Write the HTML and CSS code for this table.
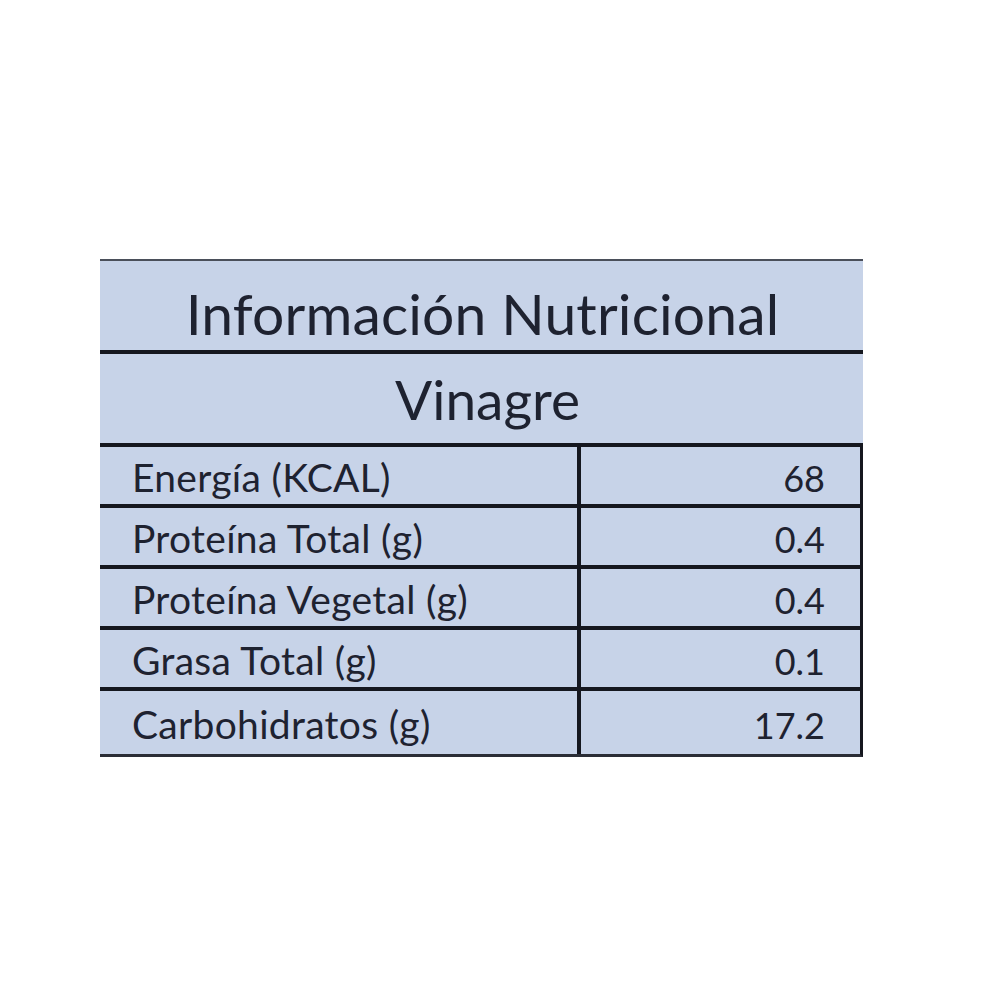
FILE: index.html
```html
<!DOCTYPE html>
<html lang="es">
<head>
<meta charset="utf-8">
<title>Información Nutricional</title>
<link rel="stylesheet" href="styles.css">
</head>
<body>
<div class="page">
  <div class="label">
    <div class="title">Información Nutricional</div>
    <div class="subtitle">Vinagre</div>
    <div class="row"><div class="name">Energía (KCAL)</div><div class="val">68</div></div>
    <div class="row"><div class="name">Proteína Total (g)</div><div class="val">0.4</div></div>
    <div class="row"><div class="name">Proteína Vegetal (g)</div><div class="val">0.4</div></div>
    <div class="row"><div class="name">Grasa Total (g)</div><div class="val">0.1</div></div>
    <div class="row last"><div class="name">Carbohidratos (g)</div><div class="val">17.2</div></div>
  </div>
</div>
</body>
</html>
```
FILE: styles.css
```css
html, body { margin: 0; padding: 0; background: #ffffff; }
.page {
  width: 1000px; height: 1000px;
  padding-top: 259px; padding-left: 100px;
  box-sizing: border-box;
}
.label {
  width: 763px;
  background: #c7d3e8;
  border-top: 2px solid #4a4f5a;
  font-family: "Lato", "Open Sans", sans-serif;
  font-weight: 400;
  color: #1e2230;
}
.title {
  height: 93px;
  border-bottom: 4px solid #15171f;
  display: flex; align-items: center; justify-content: center;
  font-size: 57px;
  letter-spacing: 0.15px;
  line-height: 1;
  padding-top: 16px; padding-left: 2px; box-sizing: border-box;
}
.subtitle {
  height: 93px;
  border-bottom: 4px solid #15171f;
  display: flex; align-items: center; justify-content: center;
  font-size: 55px;
  line-height: 1;
  padding-top: 2px; padding-left: 12px;
  box-sizing: border-box;
}
.row {
  display: grid;
  grid-template-columns: 481px 1fr;
  height: 61px;
  border-bottom: 4px solid #15171f;
  box-sizing: border-box;
  border-right: 3px solid #15171f;
}
.row.last { height: 66px; border-bottom: 3px solid #2a2d36; }
.name {
  border-right: 4px solid #15171f;
  padding-left: 32px;
  font-size: 39px;
  letter-spacing: 0.3px;
  line-height: 1;
  display: flex; align-items: center;
  padding-top: 4px;
}
.val {
  padding-right: 35px;
  font-size: 36px;
  line-height: 1;
  padding-top: 4px;
  display: flex; align-items: center; justify-content: flex-end;
}
```
